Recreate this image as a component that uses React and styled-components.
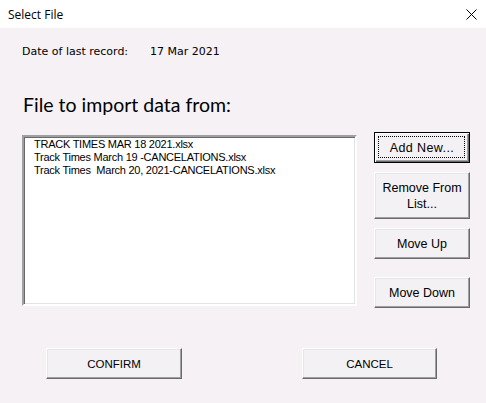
import React from 'react';
import styled, { createGlobalStyle } from 'styled-components';

const GlobalStyle = createGlobalStyle`
html, body {
  margin: 0;
  padding: 0;
  background: #f5f1f5;
}
#root {
  width: 486px;
  height: 403px;
}
`;

const Window = styled.div`
width: 486px;
height: 403px;
display: flex;
flex-direction: column;
background-color: #f5f1f5;
font-family: "Liberation Sans", Arial, sans-serif;
font-size: 12px;
color: #000;
overflow: hidden;
`;

const TitleBar = styled.div`
height: 28px;
background-color: #fff;
display: flex;
align-items: center;
justify-content: space-between;
padding: 0 5px 0 8px;
font-family: "Open Sans", "Noto Sans", sans-serif;
font-size: 12px;
`;

const CloseBox = styled.div`
width: 20px;
height: 20px;
display: flex;
align-items: center;
justify-content: center;
`;

const Body = styled.div`
flex: 1;
display: flex;
flex-direction: column;
padding: 17px 0 0 22px;
`;

const DateRow = styled.div`
display: flex;
font-family: "DejaVu Sans", Verdana, sans-serif;
font-size: 11px;
line-height: 14px;
`;

const DateLabel = styled.span`
width: 128px;
`;

const Heading = styled.h1`
margin: 34px 0 0 1px;
font-family: "Lato", "Open Sans", sans-serif;
font-weight: normal;
font-size: 19.5px;
line-height: 24px;
`;

const Main = styled.div`
display: flex;
align-items: flex-start;
margin-top: 18px;
`;

const ListBox = styled.div`
width: 335px;
height: 171px;
background: #fff;
border: 2px solid;
border-color: #a0a0a0 #fff #fff #a0a0a0;
box-shadow: inset 1px 1px 0 #696969, inset -1px -1px 0 #e3e3e3;
padding: 1px 0 0 10px;
box-sizing: border-box;
`;

const ListItem = styled.div`
font-size: 11px;
letter-spacing: -0.25px;
line-height: 13px;
white-space: pre;
`;

const Side = styled.div`
display: flex;
flex-direction: column;
margin-left: 17px;
margin-top: -3px;
`;

const Button = styled.button`
width: ${({ w }) => w || 96}px;
height: ${({ h }) => h || 31}px;
margin-top: ${({ gap }) => gap || 0}px;
padding: 0 4px;
font-family: "Liberation Sans", Arial, sans-serif;
font-size: ${({ fs }) => fs || 12.5}px;
line-height: 16px;
color: #000;
background: #f4f1f4;
border: 1px solid;
border-color: #fff #696969 #696969 #fff;
box-shadow: inset -1px -1px 0 #a0a0a0, inset 1px 1px 0 #e8e5e8;
box-sizing: border-box;
position: relative;
`;

const DefaultButton = styled(Button)`
border: 1px solid #000;
letter-spacing: 0.4px;
box-shadow: inset 1px 1px 0 #fff, inset -1px -1px 0 #696969, inset -2px -2px 0 #a0a0a0;
&::after {
  content: "";
  position: absolute;
  inset: 3px 4px 4px 3px;
  border: 1px dotted #000;
}
`;

const Footer = styled.div`
display: flex;
justify-content: space-between;
padding: 40px 49px 0 24px;
`;

export default function App() {
  const files = [
    'TRACK TIMES MAR 18 2021.xlsx',
    'Track Times March 19 -CANCELATIONS.xlsx',
    'Track Times  March 20, 2021-CANCELATIONS.xlsx',
  ];
  return (
    <>
      <GlobalStyle />
      <Window>
        <TitleBar>
          <span>Select File</span>
          <CloseBox>
            <svg width="11" height="11" viewBox="0 0 11 11">
              <path d="M0.5 0.5 L10.5 10.5 M10.5 0.5 L0.5 10.5" stroke="#000" strokeWidth="1" />
            </svg>
          </CloseBox>
        </TitleBar>
        <Body>
          <DateRow>
            <DateLabel>Date of last record:</DateLabel>
            <span>17 Mar 2021</span>
          </DateRow>
          <Heading>File to import data from:</Heading>
          <Main>
            <ListBox>
              {files.map((f) => (
                <ListItem key={f}>{f}</ListItem>
              ))}
            </ListBox>
            <Side>
              <DefaultButton>Add New...</DefaultButton>
              <Button h={47} gap={9}>Remove From<br />List...</Button>
              <Button gap={9}>Move Up</Button>
              <Button gap={18}>Move Down</Button>
            </Side>
          </Main>
          <Footer>
            <Button w={136} fs={11.5}>CONFIRM</Button>
            <Button w={135} fs={11.5}>CANCEL</Button>
          </Footer>
        </Body>
      </Window>
    </>
  );
}
